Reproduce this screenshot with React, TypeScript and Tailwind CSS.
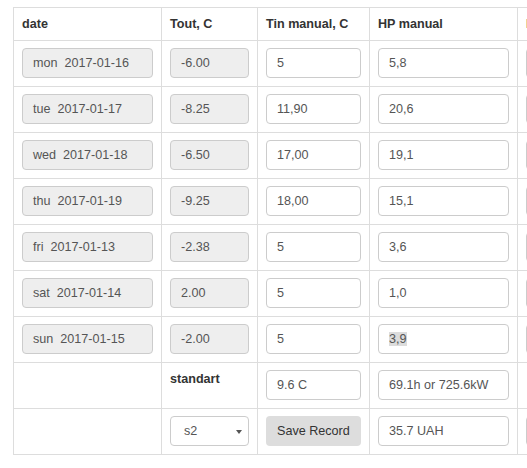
import React from "react";

const font = { fontFamily: '"Liberation Sans", Arial, Helvetica, sans-serif' };

function Field({
  children,
  readOnly = false,
}: {
  children?: React.ReactNode;
  readOnly?: boolean;
}) {
  return (
    <div
      className={
        "h-[30px] w-full rounded-[4px] border border-[#ccc] px-[10px] py-[5px] text-[12.6px] leading-[18px] text-[#555] whitespace-pre " +
        (readOnly ? "bg-[#eee]" : "bg-white")
      }
    >
      {children}
    </div>
  );
}

const rows = [
  ["mon  2017-01-16", "-6.00", "5", "5,8"],
  ["tue  2017-01-17", "-8.25", "11,90", "20,6"],
  ["wed  2017-01-18", "-6.50", "17,00", "19,1"],
  ["thu  2017-01-19", "-9.25", "18,00", "15,1"],
  ["fri  2017-01-13", "-2.38", "5", "3,6"],
  ["sat  2017-01-14", "2.00", "5", "1,0"],
  ["sun  2017-01-15", "-2.00", "5", "3,9"],
];

const th =
  "border border-[#ddd] px-[8px] py-[7px] text-left align-bottom text-[12.6px] font-bold leading-[18px] text-[#333]";
const td = "border border-[#ddd] px-[8px] pt-[7px] pb-[8px] align-top text-[12.6px] leading-[18px] text-[#333]";

export default function App() {
  return (
    <div className="h-[468px] w-[527px] overflow-hidden bg-white" style={font}>
      <div className="pl-[13px] pt-[7px]">
        <table className="w-[660px] table-fixed border-collapse">
          <colgroup>
            <col className="w-[148px]" />
            <col className="w-[96px]" />
            <col className="w-[112px]" />
            <col className="w-[148px]" />
            <col className="w-[156px]" />
          </colgroup>
          <thead>
            <tr>
              <th className={th}>date</th>
              <th className={th}>Tout, C</th>
              <th className={th}>Tin manual, C</th>
              <th className={th}>HP manual</th>
              <th className={th}>HP auto</th>
            </tr>
          </thead>
          <tbody>
            {rows.map((r, i) => (
              <tr key={i}>
                <td className={td}>
                  <Field readOnly>{r[0]}</Field>
                </td>
                <td className={td}>
                  <Field readOnly>{r[1]}</Field>
                </td>
                <td className={td}>
                  <Field>{r[2]}</Field>
                </td>
                <td className={td}>
                  {i === 6 ? (
                    <Field>
                      <span className="bg-[#dcdcdc]">{r[3]}</span>
                    </Field>
                  ) : (
                    <Field>{r[3]}</Field>
                  )}
                </td>
                <td className={td}>
                  <Field></Field>
                </td>
              </tr>
            ))}
            <tr>
              <td className={td}></td>
              <td className={td + " font-bold"}>standart</td>
              <td className={td}>
                <Field>9.6 C</Field>
              </td>
              <td className={td}>
                <Field>69.1h or 725.6kW</Field>
              </td>
              <td className={td}></td>
            </tr>
            <tr>
              <td className={td}></td>
              <td className={td}>
                <div className="relative flex h-[30px] w-full items-center rounded-[4px] border border-[#ccc] bg-white pl-[13px] text-[12.6px] leading-[18px] text-[#555]">
                  s2
                  <svg
                    className="absolute right-[6px] top-[13px]"
                    width="6"
                    height="4"
                    viewBox="0 0 6 4"
                  >
                    <path d="M0 0 H6 L3 4 Z" fill="#555" />
                  </svg>
                </div>
              </td>
              <td className={td}>
                <div className="flex h-[30px] w-full items-center rounded-[4px] bg-[#dddddd] pl-[11px] text-[12.6px] leading-[18px] text-[#333]">
                  Save Record
                </div>
              </td>
              <td className={td}>
                <Field>35.7 UAH</Field>
              </td>
              <td className={td}>
                <Field></Field>
              </td>
            </tr>
          </tbody>
        </table>
      </div>
    </div>
  );
}
